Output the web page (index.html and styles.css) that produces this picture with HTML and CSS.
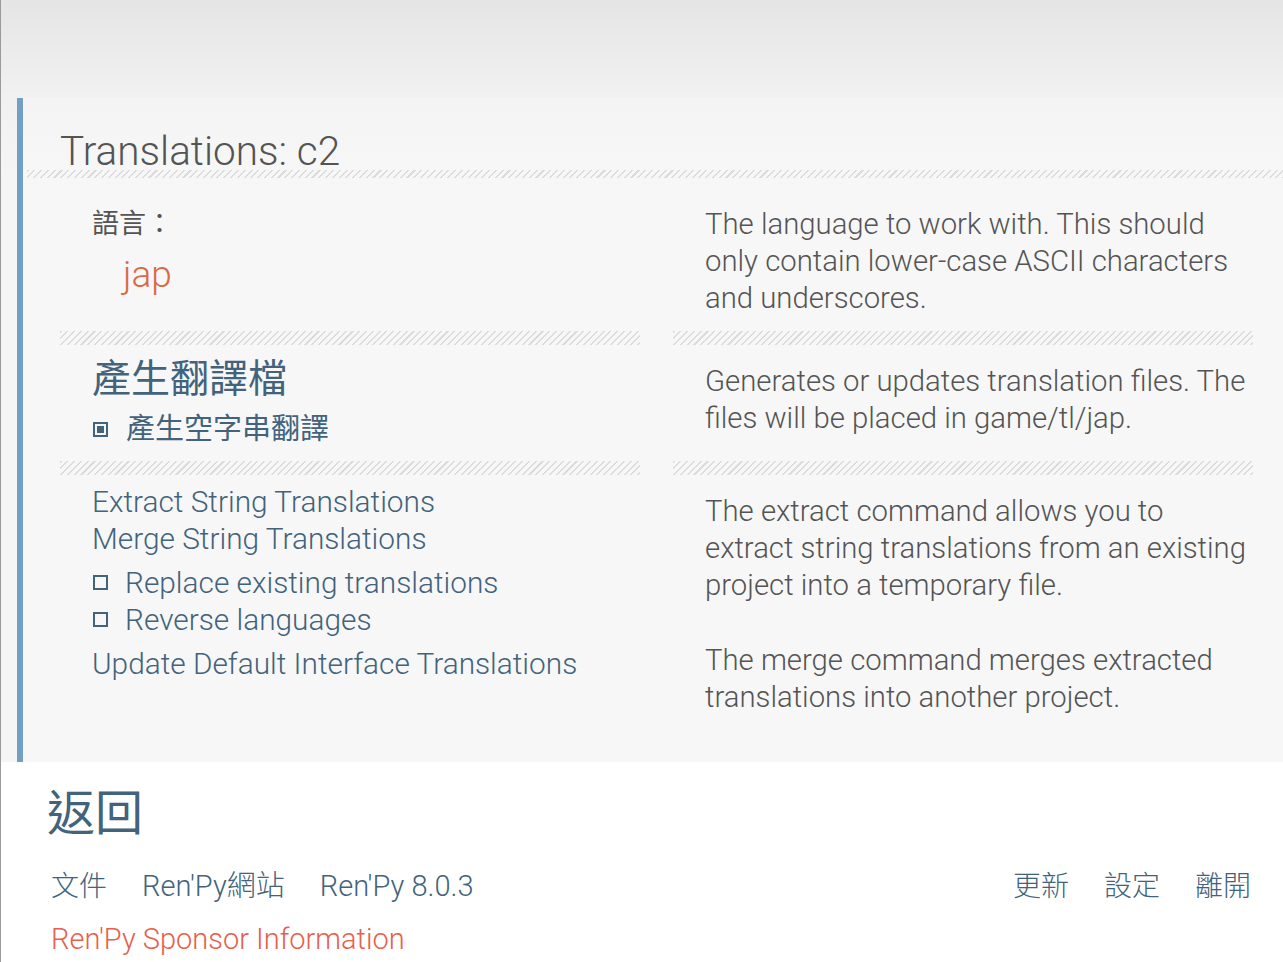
FILE: index.html
```html
<!DOCTYPE html>
<html>
<head>
<meta charset="utf-8">
<link rel="stylesheet" href="styles.css">
</head>
<body>
<div class="top"></div>
<div class="main">
  <div class="panel">
    <div class="title">Translations: c2</div>
    <div class="hatch title-hatch"></div>
    <div class="grid">
      <div class="cell left row1">
        <div class="label">語言：</div>
        <div class="lang">jap</div>
      </div>
      <div class="cell right row1">
        <p class="desc">The language to work with. This should only contain lower-case ASCII characters and underscores.</p>
      </div>
      <div class="hatch sep"></div>
      <div class="hatch sep"></div>

      <div class="cell left row2">
        <div class="heading">產生翻譯檔</div>
        <div class="check"><span class="box filled"></span><span class="cjk-small">產生空字串翻譯</span></div>
      </div>
      <div class="cell right row2">
        <p class="desc">Generates or updates translation files. The files will be placed in game/tl/jap.</p>
      </div>
      <div class="hatch sep"></div>
      <div class="hatch sep"></div>

      <div class="cell left row3">
        <div class="link">Extract String Translations</div>
        <div class="link">Merge String Translations</div>
        <div class="check opt"><span class="box"></span><span>Replace existing translations</span></div>
        <div class="check opt"><span class="box"></span><span>Reverse languages</span></div>
        <div class="link update">Update Default Interface Translations</div>
      </div>
      <div class="cell right row3">
        <p class="desc">The extract command allows you to extract string translations from an existing project into a temporary file.</p>
        <p class="desc merge">The merge command merges extracted translations into another project.</p>
      </div>
    </div>
  </div>
</div>
<div class="bottom">
  <div class="back">返回</div>
  <div class="footer">
    <div class="group">
      <span class="cjk">文件</span>
      <span>Ren'Py網站</span>
      <span>Ren'Py 8.0.3</span>
    </div>
    <div class="group">
      <span class="cjk">更新</span>
      <span class="cjk">設定</span>
      <span class="cjk">離開</span>
    </div>
  </div>
  <div class="sponsor">Ren'Py Sponsor Information</div>
</div>
</body>
</html>
```

FILE: styles.css
```css
html, body {
  margin: 0;
  padding: 0;
}
body {
  width: 1283px;
  height: 962px;
  overflow: hidden;
  background: #ffffff;
  font-family: Roboto, "Noto Sans CJK TC", sans-serif;
  font-weight: 300;
  color: #545454;
  border-left: 1px solid #9a9a9a;
  box-sizing: border-box;
}
.top {
  height: 98px;
  background: linear-gradient(#e5e5e5, #f1f1f1);
}
.main {
  background: linear-gradient(#f1f1f1, #f5f5f5 80px);
  padding-left: 16px;
}
.panel {
  height: 664px;
  background: linear-gradient(#f4f4f4, #f7f7f7 80px);
  border-left: 6px solid #72a0c5;
  box-sizing: border-box;
}
.title {
  font-size: 40.5px;
  line-height: 48px;
  padding: 29px 0 0 37px;
  color: #545454;
  font-weight: 300;
}
.hatch {
  background-image: repeating-linear-gradient(135deg, #dcdcdc 0 1.5px, transparent 1.5px 4.8px);
}
.title-hatch {
  height: 8px;
  margin: -5px 0 0 4px;
}
.grid {
  display: grid;
  grid-template-columns: 580px 580px;
  column-gap: 33px;
  margin-left: 37px;
}
.sep {
  height: 14px;
}
.cell {
  padding-left: 32px;
}
.row1 { height: 153px; box-sizing: border-box; }
.row2 { height: 116px; box-sizing: border-box; }
.desc {
  margin: 0;
  font-size: 29.3px;
  line-height: 37px;
  color: #545454;
}
.row1.right { padding-top: 28px; }
.row2.right { padding-top: 18px; }
.row3.right { padding-top: 18px; }
.merge { margin-top: 38px; }

.label {
  font-size: 27px;
  line-height: 37px;
  padding-top: 28px;
  color: #545454;
  font-weight: 400;
}
.lang {
  font-size: 37px;
  line-height: 50px;
  color: #d86b45;
  padding-left: 31px;
  margin-top: 7px;
}
.heading {
  font-size: 39px;
  line-height: 48px;
  color: #42637b;
  padding-top: 10px;
  font-weight: 400;
}
.check {
  display: flex;
  align-items: center;
  gap: 18px;
  font-size: 29px;
  line-height: 37px;
  color: #42637b;
  margin-top: 8px;
}
.cjk-small {
  font-weight: 400;
}
.box {
  width: 11px;
  height: 11px;
  border: 2px solid #42637b;
  box-sizing: content-box;
  flex: none;
  margin-left: 1px;
}
.box.filled {
  background: #42637b;
  box-shadow: inset 0 0 0 2px #f7f7f7;
}
.row3.left { padding-top: 8px; }
.link {
  font-size: 29.8px;
  line-height: 37px;
  color: #42637b;
}
.check.opt {
  font-size: 29.8px;
  margin-top: 7px;
  margin-bottom: -7px;
  gap: 17px;
}
.update {
  margin-top: 14px;
}

.bottom {
  padding: 20px 32px 0 46px;
}
.back {
  font-size: 48px;
  line-height: 64px;
  color: #42637b;
  font-weight: 400;
}
.footer {
  display: flex;
  justify-content: space-between;
  align-items: baseline;
  margin-top: 20px;
  padding-left: 4px;
  font-size: 29px;
  line-height: 40px;
  color: #42637b;
}
.cjk {
  font-size: 28px;
}
.group {
  display: flex;
  align-items: baseline;
  gap: 35px;
}
.sponsor {
  padding-left: 4px;
  margin-top: 12px;
  font-size: 29px;
  line-height: 40px;
  color: #e8604c;
}
```
